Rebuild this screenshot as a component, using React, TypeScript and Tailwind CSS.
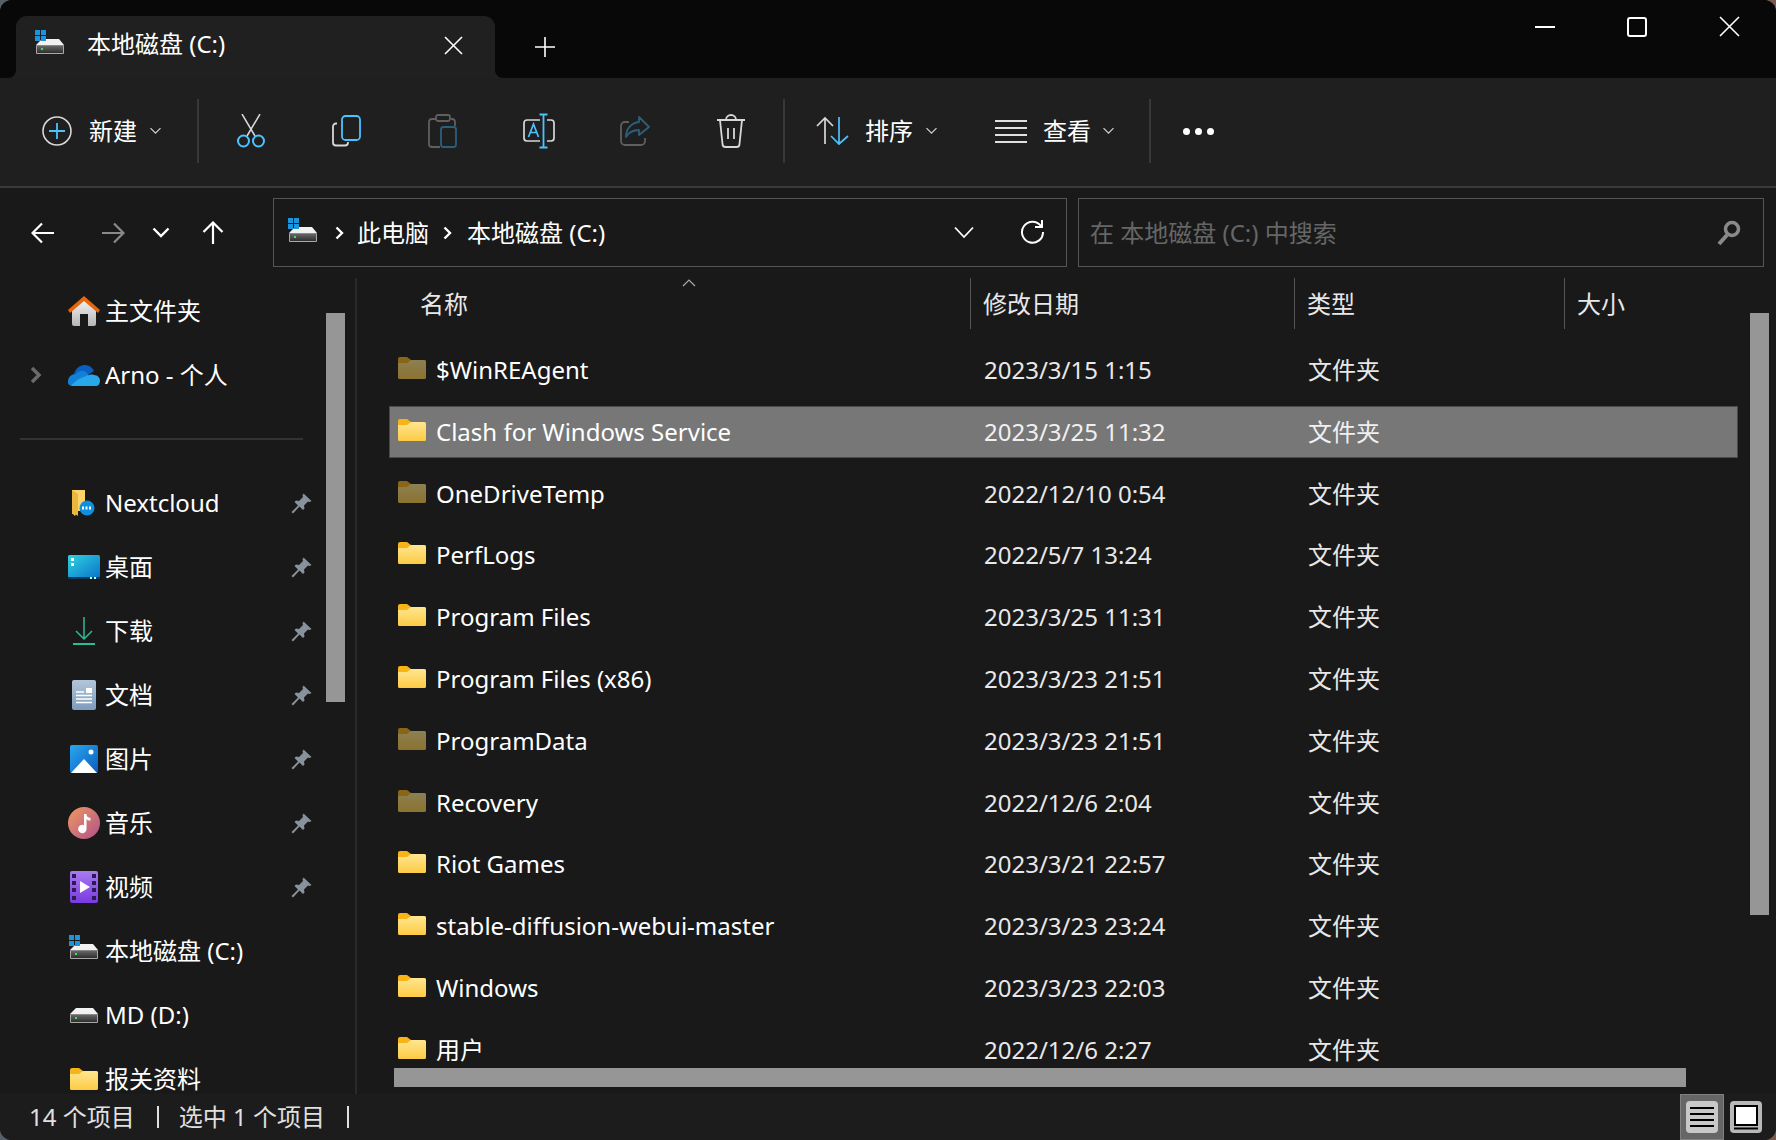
import React from "react";

const BLUE = "#4cc2ff";
const folders: [string, string, boolean][] = [
  ["$WinREAgent", "2023/3/15 1:15", true],
  ["Clash for Windows Service", "2023/3/25 11:32", false],
  ["OneDriveTemp", "2022/12/10 0:54", true],
  ["PerfLogs", "2022/5/7 13:24", false],
  ["Program Files", "2023/3/25 11:31", false],
  ["Program Files (x86)", "2023/3/23 21:51", false],
  ["ProgramData", "2023/3/23 21:51", true],
  ["Recovery", "2022/12/6 2:04", true],
  ["Riot Games", "2023/3/21 22:57", false],
  ["stable-diffusion-webui-master", "2023/3/23 23:24", false],
  ["Windows", "2023/3/23 22:03", false],
  ["用户", "2022/12/6 2:27", false],
];

function Folder({ dim = false, w = 28, h = 22 }: { dim?: boolean; w?: number; h?: number }) {
  return (
    <svg width={w} height={h} viewBox="0 0 28 22" className={dim ? "opacity-50 shrink-0" : "shrink-0"}>
      <defs>
        <linearGradient id="fbody" x1="0" y1="0" x2="0" y2="1">
          <stop offset="0" stopColor="#ffe68f" />
          <stop offset="1" stopColor="#fdcb45" />
        </linearGradient>
      </defs>
      <path d="M0 2a2 2 0 0 1 2-2h7l4 3h13a2 2 0 0 1 2 2v4H0z" fill="#f8b316" />
      <path d="M0 6h9l4-3h13a2 2 0 0 1 2 2v15.500a1.500 1.500 0 0 1-1.500 1.500h-25A1.500 1.500 0 0 1 0 20.500z" fill="url(#fbody)" />
    </svg>
  );
}

function Disk({ win = true, scale = 1 }: { win?: boolean; scale?: number }) {
  return (
    <svg width={30 * scale} height={24 * scale} viewBox="0 0 30 24" className="shrink-0">
      <defs>
        <linearGradient id="dkb" x1="0" y1="0" x2="0" y2="1">
          <stop offset="0" stopColor="#6a6a6a" />
          <stop offset="1" stopColor="#2e2e2e" />
        </linearGradient>
      </defs>
      <path d="M7 9h17l5 6H1z" fill="#f2f2f2" />
      <rect x="1" y="15" width="28" height="9" rx="1" fill="#a8a8a8" />
      <rect x="2" y="15.500" width="26" height="7.500" fill="url(#dkb)" />
      <rect x="6" y="18" width="2" height="2" fill="#3ee05a" />
      {win && (
        <g fill="#1a94dc">
          <rect x="0" y="0" width="5" height="5" />
          <rect x="6" y="0" width="5" height="5" />
          <rect x="0" y="6" width="5" height="5" />
          <rect x="6" y="6" width="5" height="5" />
        </g>
      )}
    </svg>
  );
}

function Chev({ size = 11, color = "#cfcfcf" }: { size?: number; color?: string }) {
  return (
    <svg width={size} height={size * 0.7} viewBox="0 0 11 7" fill="none" stroke={color} strokeWidth="1.300" className="shrink-0">
      <path d="M.5.800 5.500 5.800 10.500.800" />
    </svg>
  );
}

function Pin() {
  return (
    <svg width="21" height="21" viewBox="0 0 21 21" className="shrink-0">
      <path d="M12.500.500 20.500 8l-2 1-1.500-.500-4 4 .500 3-1.500 1.500-3.500-3.500L2 20.500.500 19l6.500-6.500L3.500 9l1.500-1.500 3 .500 4-4-.500-1.500z" fill="#87929b" />
    </svg>
  );
}

function IconBtn({ children }: { children: React.ReactNode }) {
  return <div className="w-[96px] flex items-center justify-center">{children}</div>;
}

function Sep() {
  return <div className="w-[2px] h-[64px] bg-[#383838] shrink-0" />;
}

const Cut = () => (
  <svg width="30" height="34" viewBox="0 0 30 34" fill="none">
    <path d="M6 0 19 22M24 0 11 22" stroke="#d8d8d8" strokeWidth="1.500" />
    <circle cx="7.500" cy="27" r="5.500" stroke={BLUE} strokeWidth="2" />
    <circle cx="22.500" cy="27" r="5.500" stroke={BLUE} strokeWidth="2" />
  </svg>
);
const Copy = () => (
  <svg width="30" height="32" viewBox="0 0 30 32" fill="none">
    <path d="M5 8.500H4a3 3 0 0 0-3 3v16a3 3 0 0 0 3 3h9a3 3 0 0 0 3-3V27" stroke="#d8d8d8" strokeWidth="1.800" />
    <rect x="10" y="1" width="18" height="24" rx="3.500" stroke={BLUE} strokeWidth="1.800" />
  </svg>
);
const Paste = () => (
  <svg width="30" height="34" viewBox="0 0 30 34" fill="none">
    <path d="M8 5H4a3 3 0 0 0-3 3v22a3 3 0 0 0 3 3h8M23 5h1a3 3 0 0 1 3 3v4" stroke="#5f5f5f" strokeWidth="1.800" />
    <rect x="8" y="1" width="14" height="6" rx="2" stroke="#5f5f5f" strokeWidth="1.800" />
    <rect x="13" y="13" width="15" height="20" rx="2.500" stroke="#2c5f7b" strokeWidth="1.800" />
  </svg>
);
const Rename = () => (
  <svg width="32" height="36" viewBox="0 0 32 36" fill="none">
    <path d="M17 7H4a3 3 0 0 0-3 3v15a3 3 0 0 0 3 3h13M24 7h4a3 3 0 0 1 3 3v15a3 3 0 0 1-3 3h-4" stroke="#d8d8d8" strokeWidth="1.700" />
    <path d="M20.500 2v32M16.500 1.500h8M16.500 34.500h8" stroke={BLUE} strokeWidth="1.800" />
    <path d="M5.500 24 10.500 11l5 13M7.500 19.500h6" stroke={BLUE} strokeWidth="1.700" />
  </svg>
);
const Share = () => (
  <svg width="30" height="32" viewBox="0 0 30 32" fill="none">
    <path d="M9 7H5a4 4 0 0 0-4 4v15a4 4 0 0 0 4 4h16a4 4 0 0 0 4-4v-3" stroke="#5f5f5f" strokeWidth="1.800" />
    <path d="M19 2l10 10-10 8v-5c-6 0-10 2-13 7 0-8 5-14 13-15z" stroke="#2c5f7b" strokeWidth="1.800" strokeLinejoin="round" />
  </svg>
);
const Trash = () => (
  <svg width="30" height="34" viewBox="0 0 30 34" fill="none" stroke="#d8d8d8" strokeWidth="1.800">
    <path d="M1 6h28M4 6l2.500 24a3 3 0 0 0 3 3h11a3 3 0 0 0 3-3L26 6M10 6a5 5 0 0 1 10 0M12 14v11M18 14v11" />
  </svg>
);
const SortI = () => (
  <svg width="33" height="30" viewBox="0 0 33 30" fill="none" strokeWidth="1.700">
    <path d="M9 28V2M1 10l8-8 8 8" stroke="#d8d8d8" />
    <path d="M23 1v27M15 20l8 8 9-8" stroke={BLUE} />
  </svg>
);
const ListI = () => (
  <svg width="32" height="24" viewBox="0 0 32 24" fill="none" stroke="#e0e0e0" strokeWidth="2">
    <path d="M0 2h32M0 9h32M0 16h32M0 23h32" />
  </svg>
);

const NavArrow = ({ color = "#fff", rot = 0 }: { color?: string; rot?: number }) => (
  <svg width="24" height="24" viewBox="0 0 24 24" fill="none" stroke={color} strokeWidth="2.200" style={{ transform: `rotate(${rot}deg)` }}>
    <path d="M23 12H2M11 2.500 1.500 12 11 21.500" />
  </svg>
);
const Gt = () => (
  <svg width="9" height="14" viewBox="0 0 9 14" fill="none" stroke="#fff" strokeWidth="2.400" className="shrink-0">
    <path d="M1.500 1.500 7 7l-5.500 5.500" />
  </svg>
);

function Side({ icon, text, pin = false, chev = false }: { icon: React.ReactNode; text: string; pin?: boolean; chev?: boolean }) {
  return (
    <div className="relative h-[64px] flex items-center text-white shrink-0">
      {chev && (
        <svg width="12" height="18" viewBox="0 0 12 18" fill="none" stroke="#6a6a6a" strokeWidth="3.500" className="absolute left-[30px]">
          <path d="M2 2l7 7-7 7" />
        </svg>
      )}
      <div className="w-[34px] ml-[67px] flex items-center justify-center shrink-0">{icon}</div>
      <span className="ml-[4px]">{text}</span>
      {pin && (
        <div className="absolute left-[291px]">
          <Pin />
        </div>
      )}
    </div>
  );
}

const Home = (
  <svg width="32" height="30" viewBox="0 0 32 30">
    <defs>
      <linearGradient id="hb" x1="0" y1="0" x2="0" y2="1">
        <stop offset="0" stopColor="#f5f5f5" />
        <stop offset="1" stopColor="#b5b5b5" />
      </linearGradient>
    </defs>
    <path d="M4 13 16 3l12 10v15a2 2 0 0 1-2 2h-6V18h-8v12H6a2 2 0 0 1-2-2z" fill="url(#hb)" />
    <path d="M0 14 16 0l16 14-2 3L16 5 2 17z" fill="#e8660d" />
  </svg>
);
const Cloud = (
  <svg width="32" height="21" viewBox="0 0 32 21">
    <path d="M6 9C8 2 13 0 17 0c4 0 7 2 9 6L14 14z" fill="#0a5fc0" />
    <path d="M4 21a4 4 0 0 1-4-5c.500-4 3-7 8-7 3-4 8-4 11-1l8 13z" fill="#1180d8" />
    <path d="M4 21c-2 0 6-8 12-9 4-2 7-3 10-2 4 0 6 3 6 6 0 3-2 5-4 5z" fill="#28a8ea" />
  </svg>
);
const Nextcloud = (
  <svg width="24" height="28" viewBox="0 0 24 28">
    <path d="M0 1h13v21H5l-2 5-3-3z" fill="#fcd36b" />
    <path d="M0 1l6 4v22l-3-2H0z" fill="#e8b83e" />
    <circle cx="15" cy="19" r="7.500" fill="#0f8fe0" />
    <path d="M10 19h10" stroke="#fff" strokeWidth="3" strokeDasharray="2 1.500" />
  </svg>
);
const Desktop = (
  <svg width="32" height="24" viewBox="0 0 32 24">
    <defs>
      <linearGradient id="dk" x1="0" y1="0" x2="1" y2="1">
        <stop offset="0" stopColor="#2fd3e2" />
        <stop offset="1" stopColor="#0a74c8" />
      </linearGradient>
    </defs>
    <rect width="32" height="22.500" rx="1.500" fill="url(#dk)" />
    <rect y="22" width="32" height="2" fill="#0e3c5e" />
    <rect x="3" y="3" width="3" height="3" fill="#fff" />
    <rect x="3" y="8" width="3" height="3" fill="#fff" />
    <rect x="22" y="22" width="2" height="2" fill="#cfe" />
    <rect x="26" y="22" width="2" height="2" fill="#cfe" />
  </svg>
);
const Download = (
  <svg width="22" height="28" viewBox="0 0 22 28" fill="none" stroke="#2cbb96" strokeWidth="1.500">
    <path d="M11 0v22M3 14l8 8 8-8" />
    <path d="M0 27h22" strokeWidth="2" />
  </svg>
);
const Docs = (
  <svg width="24" height="30" viewBox="0 0 24 30">
    <defs>
      <linearGradient id="dc" x1="0" y1="0" x2="0" y2="1">
        <stop offset="0" stopColor="#b2c6da" />
        <stop offset="1" stopColor="#7d9dbc" />
      </linearGradient>
    </defs>
    <rect width="24" height="30" rx="2" fill="url(#dc)" />
    <path d="M4 12h8M4 15.500h16M4 19h16M4 22.500h16" stroke="#fff" strokeWidth="1.500" />
    <rect x="14" y="8" width="6" height="5" fill="#fff" />
  </svg>
);
const Pics = (
  <svg width="28" height="28" viewBox="0 0 28 28">
    <defs>
      <linearGradient id="pc" x1="0" y1="0" x2="1" y2="1">
        <stop offset="0" stopColor="#2aa7ee" />
        <stop offset="1" stopColor="#0a5cc0" />
      </linearGradient>
    </defs>
    <rect width="28" height="28" rx="2" fill="url(#pc)" />
    <path d="M1 28 14 14l13 14z" fill="#fff" />
    <circle cx="21" cy="7" r="2.500" fill="#fff" />
  </svg>
);
const Music = (
  <svg width="32" height="32" viewBox="0 0 32 32">
    <defs>
      <linearGradient id="mu" x1="0" y1="0" x2="1" y2="1">
        <stop offset="0" stopColor="#f09a5f" />
        <stop offset="1" stopColor="#b0508c" />
      </linearGradient>
    </defs>
    <circle cx="16" cy="16" r="16" fill="url(#mu)" />
    <path d="M16 7h2.500c0 3 2 3.500 4 4v2.500c-2 0-3.500-.500-4-1.500v10a4.200 4.200 0 1 1-2.500-3.800z" fill="#fff" />
  </svg>
);
const Video = (
  <svg width="28" height="32" viewBox="0 0 28 32">
    <defs>
      <linearGradient id="vd" x1="0" y1="0" x2="0" y2="1">
        <stop offset="0" stopColor="#a77bf0" />
        <stop offset="1" stopColor="#7a3ae0" />
      </linearGradient>
    </defs>
    <rect width="28" height="32" rx="2" fill="url(#vd)" />
    <path d="M2 3h4v4H2zM2 10h4v4H2zM2 17h4v4H2zM2 25h4v4H2zM22 3h4v4h-4zM22 10h4v4h-4zM22 17h4v4h-4zM22 25h4v4h-4z" fill="#2c1a55" />
    <path d="M10 10l10 6-10 6z" fill="#fff" />
  </svg>
);

export default function App() {
  return (
    <div className="w-[1776px] h-[1140px] bg-[linear-gradient(90deg,#55606a,#7a5a50)] overflow-hidden font-['Noto_Sans','Noto_Sans_CJK_SC',sans-serif] text-[24px]">
      <div className="relative w-full h-full rounded-[12px] overflow-hidden bg-[#191919] flex flex-col">
        {/* Title bar */}
        <div className="h-[78px] bg-[#080808] flex items-end shrink-0 relative">
          <div className="relative ml-[16px] w-[479px] h-[62px] bg-[#202020] rounded-t-[11px] flex items-center text-white">
            <div className="absolute left-[-8px] bottom-0 w-[8px] h-[8px] bg-[#202020]">
              <div className="w-full h-full bg-[#080808] rounded-br-[8px]" />
            </div>
            <div className="absolute right-[-8px] bottom-0 w-[8px] h-[8px] bg-[#202020]">
              <div className="w-full h-full bg-[#080808] rounded-bl-[8px]" />
            </div>
            <div className="ml-[19px] -mt-[10px]">
              <Disk />
            </div>
            <span className="ml-[22px] -mt-[6px]">本地磁盘 (C:)</span>
            <svg width="19" height="19" viewBox="0 0 19 19" className="absolute left-[428px] top-[20px]" stroke="#fff" strokeWidth="1.600">
              <path d="M1 1l17 17M18 1 1 18" />
            </svg>
          </div>
          <svg width="20" height="20" viewBox="0 0 20 20" className="ml-[40px] mb-[21px]" stroke="#fff" strokeWidth="1.600">
            <path d="M10 0v20M0 10h20" />
          </svg>
          <div className="absolute right-[36px] top-[16px] flex items-center gap-[72px]">
            <div className="w-[20px] h-[2px] bg-white" />
            <div className="w-[20px] h-[20px] border-2 border-white rounded-[3px]" />
            <svg width="21" height="21" viewBox="0 0 21 21" stroke="#fff" strokeWidth="1.600">
              <path d="M1 1l19 19M20 1 1 20" />
            </svg>
          </div>
        </div>

        {/* Toolbar */}
        <div className="h-[108px] bg-[#1f1f1f] flex items-center shrink-0 text-white pb-[2px]">
          <svg width="30" height="30" viewBox="0 0 30 30" fill="none" className="ml-[42px] shrink-0">
            <circle cx="15" cy="15" r="14" stroke="#d8d8d8" strokeWidth="1.600" />
            <path d="M15 7v16M7 15h16" stroke={BLUE} strokeWidth="1.800" />
          </svg>
          <span className="ml-[17px] w-[48px]">新建</span>
          <div className="ml-[13px]">
            <Chev />
          </div>
          <div className="ml-[36px]">
            <Sep />
          </div>
          <div className="ml-[4px] flex">
            <IconBtn><Cut /></IconBtn>
            <IconBtn><Copy /></IconBtn>
            <IconBtn><Paste /></IconBtn>
            <IconBtn><Rename /></IconBtn>
            <IconBtn><Share /></IconBtn>
            <IconBtn><Trash /></IconBtn>
          </div>
          <div className="ml-[4px]">
            <Sep />
          </div>
          <div className="ml-[31px]">
            <SortI />
          </div>
          <span className="ml-[16px] w-[48px]">排序</span>
          <div className="ml-[13px]">
            <Chev />
          </div>
          <div className="ml-[58px]">
            <ListI />
          </div>
          <span className="ml-[16px] w-[48px]">查看</span>
          <div className="ml-[12px]">
            <Chev />
          </div>
          <div className="ml-[35px]">
            <Sep />
          </div>
          <div className="ml-[32px] flex gap-[5px]">
            <div className="w-[7px] h-[7px] rounded-full bg-white" />
            <div className="w-[7px] h-[7px] rounded-full bg-white" />
            <div className="w-[7px] h-[7px] rounded-full bg-white" />
          </div>
        </div>
        <div className="h-[2px] bg-[#3a3a3a] shrink-0" />

        {/* Address row */}
        <div className="h-[90px] flex shrink-0 pt-[10px] bg-[#191919] text-white">
          <div className="w-[273px] h-[69px] relative flex items-center shrink-0">
            <div className="ml-[31px]"><NavArrow /></div>
            <div className="ml-[46px]"><NavArrow color="#8a8a8a" rot={180} /></div>
            <svg width="18" height="11" viewBox="0 0 18 11" fill="none" stroke="#fff" strokeWidth="2.400" className="ml-[27px]">
              <path d="M1.500 1.500 9 9l7.500-7.500" />
            </svg>
            <div className="ml-[31px]"><NavArrow rot={90} /></div>
          </div>
          <div className="w-[794px] h-[69px] border-[1.500px] border-[#555] flex items-center shrink-0 relative">
            <div className="ml-[14px] -mt-[6px]"><Disk /></div>
            <div className="ml-[17px]"><Gt /></div>
            <span className="ml-[13px]">此电脑</span>
            <div className="ml-[14px]"><Gt /></div>
            <span className="ml-[15px]">本地磁盘 (C:)</span>
            <svg width="20" height="13" viewBox="0 0 20 13" fill="none" stroke="#fff" strokeWidth="1.800" className="absolute left-[680px] top-[27px]">
              <path d="M1 1.500 10 11l9-9.500" />
            </svg>
            <svg width="24" height="26" viewBox="0 0 24 26" fill="none" stroke="#fff" strokeWidth="2" className="absolute left-[746px] top-[20px]">
              <path d="M21 7a10.500 10.500 0 1 0 2 6M22 1v7h-7" />
            </svg>
          </div>
          <div className="w-[686px] h-[69px] ml-[11px] border-[1.500px] border-[#555] flex items-center justify-between shrink-0">
            <span className="ml-[11px] text-[#666]">在 本地磁盘 (C:) 中搜索</span>
            <svg width="24" height="26" viewBox="0 0 24 26" fill="none" className="mr-[22px]">
              <circle cx="15" cy="9" r="6.500" stroke="#8a8a8a" strokeWidth="3.500" />
              <path d="M10 15 2 24" stroke="#8a8a8a" strokeWidth="4" />
            </svg>
          </div>
        </div>

        {/* Body */}
        <div className="flex-1 flex min-h-0 relative">
          {/* Sidebar */}
          <div className="w-[355px] shrink-0 relative overflow-hidden flex flex-col pt-[1px]">
            <Side icon={Home} text="主文件夹" />
            <Side icon={Cloud} text="Arno - 个人" chev />
            <div className="h-[64px] flex items-center shrink-0">
              <div className="ml-[20px] w-[283px] h-[2px] bg-[#333]" />
            </div>
            <Side icon={Nextcloud} text="Nextcloud" pin />
            <Side icon={Desktop} text="桌面" pin />
            <Side icon={Download} text="下载" pin />
            <Side icon={Docs} text="文档" pin />
            <Side icon={Pics} text="图片" pin />
            <Side icon={Music} text="音乐" pin />
            <Side icon={Video} text="视频" pin />
            <Side icon={<div className="-mt-[8px]"><Disk /></div>} text="本地磁盘 (C:)" />
            <Side icon={<div className="-mt-[8px]"><Disk win={false} /></div>} text="MD (D:)" />
            <Side icon={<Folder w={28} h={22} />} text="报关资料" />
            <div className="absolute left-[326px] top-[35px] w-[19px] h-[389px] bg-[#969696]" />
          </div>
          <div className="w-[2px] bg-[#2a2a2a] shrink-0" />

          {/* Main */}
          <div className="flex-1 min-w-0 flex flex-col relative text-[#e8e8e8]">
            <div className="h-[51px] mb-[10px] flex items-center shrink-0 relative">
              <div className="w-[614px] h-full flex items-center pl-[63px] border-r border-[#555] shrink-0">名称</div>
              <div className="w-[324px] h-full flex items-center pl-[12px] border-r border-[#555] shrink-0">修改日期</div>
              <div className="w-[270px] h-full flex items-center pl-[12px] border-r border-[#555] shrink-0">类型</div>
              <div className="pl-[12px]">大小</div>
              <svg width="14" height="8" viewBox="0 0 14 8" fill="none" stroke="#aaa" strokeWidth="1.200" className="absolute left-[325px] top-[1px]">
                <path d="M1 7l6-6 6 6" />
              </svg>
            </div>
            <div className="flex-1 min-h-0 overflow-hidden pt-[5px] pl-[32px] pr-[38px]">
              {folders.map(([name, date, dim], i) => {
                const sel = i === 1;
                return (
                  <div
                    key={name}
                    className={
                      sel
                        ? "h-[52px] mb-[9.8px] grid grid-cols-[595px_324px_1fr] items-center bg-[#777] border border-[#4a4a4a]"
                        : "h-[52px] mb-[9.8px] grid grid-cols-[595px_324px_1fr] items-center border border-transparent"
                    }
                  >
                    <div className="flex items-center pl-[8px]">
                      <div className="-mt-[4px]">
                        <Folder dim={dim} />
                      </div>
                      <span className="ml-[10px] text-white">{name}</span>
                    </div>
                    <div className={sel ? "-ml-[1px] text-[#f0f0f0]" : "-ml-[1px]"}>{date}</div>
                    <div className={sel ? "-ml-[1px] text-[#f0f0f0]" : "-ml-[1px]"}>文件夹</div>
                  </div>
                );
              })}
            </div>
            <div className="h-[32px] pt-[6px] pl-[37px] shrink-0 bg-[#191919]">
              <div className="w-[1292px] h-[19px] bg-[#969696]" />
            </div>
            <div className="absolute left-[1393px] top-[35px] w-[19px] h-[602px] bg-[#969696]" />
          </div>
        </div>

        {/* Status bar */}
        <div className="h-[46px] bg-[#1c1c1c] flex items-center shrink-0 text-[#e0e0e0] relative">
          <span className="ml-[29px]">14 个项目</span>
          <div className="ml-[22px] w-[2px] h-[22px] bg-[#e0e0e0]" />
          <span className="ml-[20px]">选中 1 个项目</span>
          <div className="ml-[22px] w-[2px] h-[22px] bg-[#e0e0e0]" />
          <div className="absolute left-[1680px] top-0 w-[44px] h-[46px] bg-[#666] border border-[#808080] flex items-center justify-center">
            <svg width="32" height="32" viewBox="0 0 32 32">
              <rect width="32" height="32" rx="4" fill="#c8c8c8" />
              <path d="M4 7h24M4 13h24M4 19h24M4 25h24" stroke="#000" strokeWidth="2" />
            </svg>
          </div>
          <div className="absolute left-[1730px] top-[7px]">
            <svg width="32" height="32" viewBox="0 0 32 32">
              <rect width="32" height="32" rx="4" fill="#b8b8b8" />
              <rect x="5" y="5" width="22" height="19" fill="#fff" stroke="#000" strokeWidth="2" />
              <path d="M4 27.500h24" stroke="#000" strokeWidth="2" />
            </svg>
          </div>
        </div>
      </div>
    </div>
  );
}
